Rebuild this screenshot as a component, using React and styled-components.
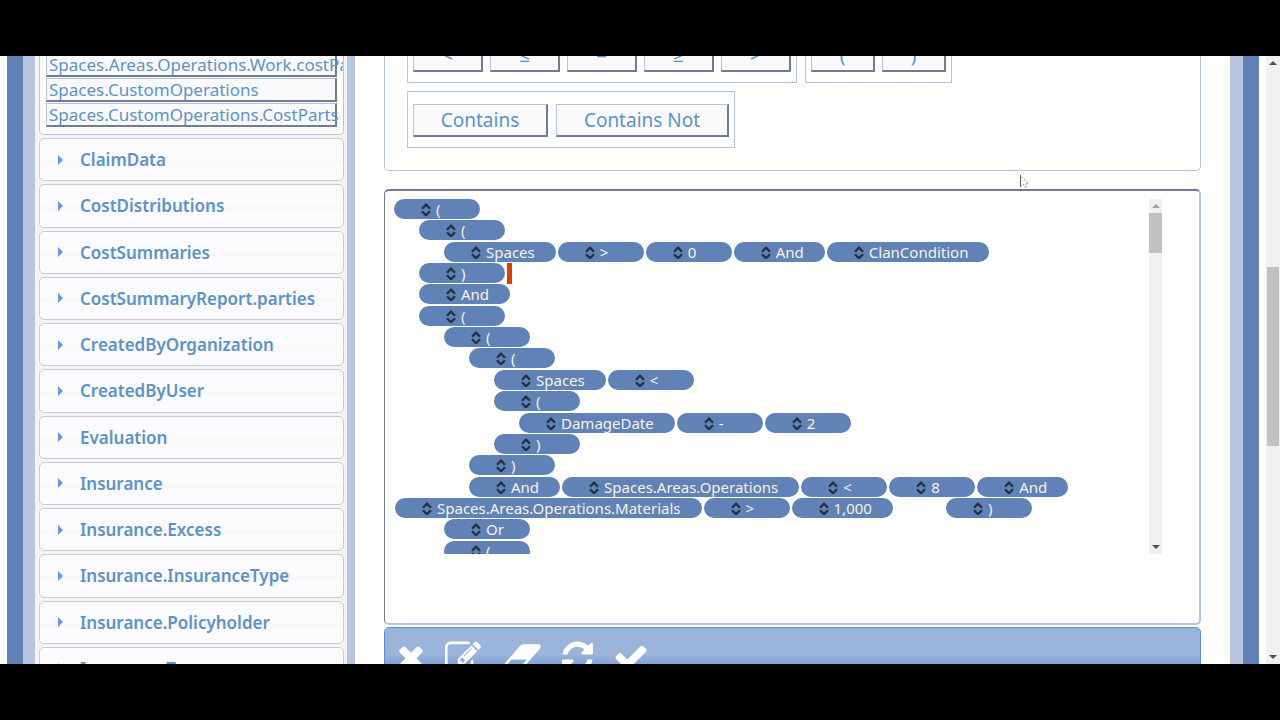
import React from "react";
import styled, { createGlobalStyle } from "styled-components";

const color = {
  steel: "#6082b6",
  light: "#b7c5e0",
  line: "#b4c4e0",
  dark: "#737b90",
  text: "#5b93c6",
  paper: "#fefefd",
};

const GlobalStyle = createGlobalStyle`
  * { box-sizing: border-box; }
  body { margin: 0; background: #000; font-family: "Noto Sans", "Open Sans", sans-serif; }
  button { font-family: inherit; margin: 0; cursor: pointer; }
`;

const Screen = styled.div`
  height: 100vh;
  padding: 56px 0;
  background: #000;
`;

const Page = styled.div`
  position: relative;
  display: flex;
  height: 100%;
  padding-left: 7px;
  overflow: hidden;
  background: ${color.paper};
`;

const Stripe = styled.div`
  flex: none;
  width: ${(p) => p.$width}px;
  background: ${(p) => p.$color};
`;

const Sidebar = styled.nav`
  flex: none;
  display: flex;
  flex-direction: column;
  width: 312px;
  padding: 0 3px 0 4px;
  background: #f3f4f5;
`;

const FieldList = styled.div`
  flex: none;
  display: flex;
  flex-direction: column;
  justify-content: flex-end;
  gap: 1px;
  height: 79px;
  padding: 0 6px 7px;
  overflow: hidden;
  border: 1px solid ${color.line};
  border-top: 0;
  border-radius: 0 0 5px 5px;
  background: ${color.paper};
`;

const Field = styled.button`
  flex: none;
  height: 24px;
  padding: 0 2px;
  border: solid;
  border-width: 1px 2px 2px 1px;
  border-color: ${color.line} ${color.dark} ${color.dark} ${color.line};
  background: #fafafc;
  color: ${color.text};
  font-size: 17px;
  line-height: 21px;
  text-align: left;
  white-space: nowrap;
`;

const Sections = styled.div`
  flex: 1;
  display: flex;
  flex-direction: column;
  gap: 3px;
  margin: 3px 0 -26px;
`;

const Section = styled.button`
  flex: 1;
  display: flex;
  align-items: center;
  gap: 16px;
  min-height: 42px;
  padding: 0 17px;
  border: 1px solid #cbccd2;
  border-radius: 5px;
  background: linear-gradient(#fbfbfd 50%, #f7f7f7 54%, #fbfbfd 62%);
  color: ${color.text};
  font-size: 17px;
  font-weight: 600;
  text-align: left;
`;

const Main = styled.main`
  flex: 1;
  display: flex;
  flex-direction: column;
  min-width: 0;
  padding: 0 29px;
`;

const Operators = styled.section`
  flex: none;
  display: flex;
  flex-direction: column;
  justify-content: flex-end;
  gap: 8px;
  height: 115px;
  padding: 0 22px 22px;
  overflow: hidden;
  border: 1px solid ${color.line};
  border-top: 0;
  border-radius: 0 0 5px 5px;
`;

const GroupRow = styled.div`
  display: flex;
  gap: 8px;
`;

const Group = styled.div`
  display: flex;
  gap: ${(p) => p.$gap}px;
  padding: 12px 5px 10px;
  border: 1px solid ${color.line};
`;

const Operator = styled.button`
  width: ${(p) => p.$width}px;
  height: 33px;
  padding: 0;
  border: solid;
  border-width: 1px 2px 2px 1px;
  border-color: ${color.line} ${color.dark} ${color.dark} ${color.line};
  background: #fafafc;
  color: ${color.text};
  font-size: 19px;
  line-height: 30px;
`;

const Editor = styled.section`
  flex: none;
  height: 436px;
  margin-top: 18px;
  padding: 8px 37px 0 9px;
  border: 1px solid ${color.dark};
  border-top-width: 2px;
  border-right: 2px solid ${color.line};
  border-bottom: 2px solid ${color.line};
  border-radius: 5px;
`;

const Scroller = styled.div`
  display: flex;
  height: 355px;
  overflow: hidden;
`;

const Tree = styled.div`
  flex: 1;
  display: grid;
  grid-auto-rows: 1fr;
  height: 363px;
`;

const TreeRow = styled.div`
  display: flex;
  align-items: flex-start;
  gap: 2px;
  padding-left: ${(p) => (p.$wrapped ? 1 : p.$depth * 25)}px;
`;

const Pill = styled.button`
  flex: none;
  display: flex;
  align-items: center;
  gap: 5px;
  min-width: 86px;
  height: 20px;
  padding: 0 21px 0 27px;
  border: 0;
  border-radius: 10px;
  background: ${color.steel};
  color: #f8f1e6;
  font-size: 15px;
  line-height: 20px;
  white-space: nowrap;
`;

const Space = styled.span`
  width: 49px;
`;

const Caret = styled.span`
  align-self: stretch;
  width: 5px;
  background: #dc3e04;
`;

const Track = styled.div`
  flex: none;
  display: flex;
  flex-direction: column;
  align-items: center;
  justify-content: space-between;
  width: ${(p) => p.$width}px;
  padding: 4px 0;
  background: #f0f0f3;
`;

const Thumb = styled.div`
  width: ${(p) => p.$width}px;
  height: ${(p) => p.$height}px;
  margin: ${(p) => p.$top}px 0 auto;
  background: #c1c1c2;
`;

const Toolbar = styled.div`
  flex: none;
  display: flex;
  align-items: flex-start;
  gap: 20px;
  height: 60px;
  margin-top: 2px;
  padding: 11px 12px;
  border: 1px solid #5f8fd4;
  border-radius: 5px;
  background: linear-gradient(#9ab4da 45%, #86a5d5 60%);
`;

const Tool = styled.button`
  display: flex;
  padding: 0;
  border: 0;
  background: none;
  color: #fff;
`;

const Gap = styled.div`
  flex: none;
  width: 7px;
`;

const Pointer = styled.svg`
  position: absolute;
  left: 1020px;
  top: 119px;
`;

const sections = [
  "ClaimData",
  "CostDistributions",
  "CostSummaries",
  "CostSummaryReport.parties",
  "CreatedByOrganization",
  "CreatedByUser",
  "Evaluation",
  "Insurance",
  "Insurance.Excess",
  "Insurance.InsuranceType",
  "Insurance.Policyholder",
  "Insurance.Type",
];

const fields = [
  "Spaces.Areas.Operations.Work.costParts",
  "Spaces.CustomOperations",
  "Spaces.CustomOperations.CostParts",
];

const rows = [
  { depth: 0, items: ["("] },
  { depth: 1, items: ["("] },
  { depth: 2, items: ["Spaces", ">", "0", "And", "ClanCondition"] },
  { depth: 1, items: [")"], caret: true },
  { depth: 1, items: ["And"] },
  { depth: 1, items: ["("] },
  { depth: 2, items: ["("] },
  { depth: 3, items: ["("] },
  { depth: 4, items: ["Spaces", "<"] },
  { depth: 4, items: ["("] },
  { depth: 5, items: ["DamageDate", "-", "2"] },
  { depth: 4, items: [")"] },
  { depth: 3, items: [")"] },
  { depth: 3, items: ["And", "Spaces.Areas.Operations", "<", "8", "And"] },
  { wrapped: true, items: ["Spaces.Areas.Operations.Materials", ">", "1,000", null, ")"] },
  { depth: 2, items: ["Or"] },
  { depth: 2, items: ["("] },
];

const tools = [
  {
    label: "Delete",
    x: 192,
    units: 1408,
    width: 28,
    d: "M1490 1322q0 40-28 68l-136 136q-28 28-68 28t-68-28l-294-294-294 294q-28 28-68 28t-68-28l-136-136q-28-28-28-68t28-68l294-294-294-294q-28-28-28-68t28-68l136-136q28-28 68-28t68 28l294 294 294-294q28-28 68-28t68 28l136 136q28 28 28 68t-28 68l-294 294 294 294q28 28 28 68z",
  },
  {
    label: "Edit",
    x: 0,
    units: 1792,
    width: 36,
    d: "M888 1184l116-116-152-152-116 116v56h96v96h56zm440-720q-16-16-33 1l-350 350q-17 17-1 33t33-1l350-350q17-17 1-33zm80 594v190q0 119-84.5 203.5t-203.5 84.5h-832q-119 0-203.5-84.5t-84.5-203.5v-832q0-119 84.5-203.5t203.5-84.5h832q63 0 117 25 15 7 18 23 3 17-9 29l-49 49q-14 14-32 8-23-6-45-6h-832q-66 0-113 47t-47 113v832q0 66 47 113t113 47h832q66 0 113-47t47-113v-126q0-13 9-22l64-64q15-15 35-7t20 29zm-96-738l288 288-672 672h-288v-288zm444 132l-92 92-288-288 92-92q28-28 68-28t68 28l152 152q28 28 28 68t-28 68z",
  },
  {
    label: "Clear",
    x: 0,
    units: 2048,
    width: 41,
    d: "M960 1408l336-384h-768l-336 384h768zm1013-1077q15 34 9.5 71.5t-30.5 65.5l-896 1024q-38 44-96 44h-768q-38 0-69.5-20.5t-47.5-54.5q-15-34-9.5-71.5t30.5-65.5l896-1024q38-44 96-44h768q38 0 69.5 20.5t47.5 54.5z",
  },
  {
    label: "Refresh",
    x: 128,
    units: 1536,
    width: 31,
    d: "M1639 1056q0 5-1 7-64 268-268 434.5t-478 166.5q-146 0-282.5-55t-243.5-157l-129 129q-19 19-45 19t-45-19-19-45v-448q0-26 19-45t45-19h448q26 0 45 19t19 45-19 45l-137 137q71 66 161 102t187 36q134 0 250-65t186-179q11-17 53-117 8-23 30-23h192q13 0 22.5 9.5t9.5 22.5zm25-800v448q0 26-19 45t-45 19h-448q-26 0-45-19t-19-45 19-45l138-138q-148-137-349-137-134 0-250 65t-186 179q-11 17-53 117-8 23-30 23h-199q-13 0-22.5-9.5t-9.5-22.5v-7q65-268 270-434.5t480-166.5q146 0 284 55.5t245 156.5l130-129q19-19 45-19t45 19 19 45z",
  },
  {
    label: "Apply",
    x: 0,
    units: 1792,
    width: 36,
    d: "M1671 566q0 40-28 68l-724 724-136 136q-28 28-68 28t-68-28l-136-136-362-362q-28-28-28-68t28-68l136-136q28-28 68-28t68 28l294 295 656-657q28-28 68-28t68 28l136 136q28 28 28 68z",
  },
];

const Triangle = () => (
  <svg width="7" height="10" viewBox="0 0 7 10" aria-hidden="true">
    <path d="M1 0l5 5-5 5z" fill="#6398e2" />
  </svg>
);

const SortIcon = () => (
  <svg width="10" height="14" viewBox="0 0 10 14" aria-hidden="true">
    <path
      d="M1 6.2L5 2.2l4 4M1 8.8l4 4 4-4"
      transform="translate(0 .5)"
      fill="none"
      stroke="#25303f"
      strokeWidth="2.3"
    />
  </svg>
);

const Arrow = ({ down, fill = "#4c4f58" }) => (
  <svg width="8" height="5" viewBox="0 0 8 5" aria-hidden="true">
    <path d={down ? "M0 0h8L4 4z" : "M0 5h8L4 1z"} fill={fill} />
  </svg>
);

function OperatorGroup({ items, width }) {
  return (
    <Group $gap={7}>
      {items.map((item) => (
        <Operator key={item} type="button" $width={width}>
          {item}
        </Operator>
      ))}
    </Group>
  );
}

export default function App() {
  return (
    <Screen>
      <GlobalStyle />
      <Page>
        <Stripe $width={16} $color={color.steel} />
        <Stripe $width={12} $color={color.light} />
        <Sidebar>
          <FieldList>
            {fields.map((f) => (
              <Field key={f} type="button">{f}</Field>
            ))}
          </FieldList>
          <Sections>
            {sections.map((s) => (
              <Section key={s} type="button">
                <Triangle />
                {s}
              </Section>
            ))}
          </Sections>
        </Sidebar>
        <Stripe $width={8} $color={color.light} />
        <Main>
          <Operators>
            <GroupRow>
              <OperatorGroup items={["<", "≤", "=", "≥", ">"]} width={70} />
              <OperatorGroup items={["(", ")"]} width={64} />
            </GroupRow>
            <GroupRow>
              <Group $gap={8}>
                <Operator type="button" $width={135}>Contains</Operator>
                <Operator type="button" $width={173}>Contains Not</Operator>
              </Group>
            </GroupRow>
          </Operators>
          <Editor>
            <Scroller>
              <Tree>
                {rows.map((row, i) => (
                  <TreeRow key={i} $depth={row.depth} $wrapped={row.wrapped}>
                    {row.items.map((item, j) =>
                      item === null ? (
                        <Space key={j} />
                      ) : (
                        <Pill key={j} type="button">
                          <SortIcon />
                          {item}
                        </Pill>
                      )
                    )}
                    {row.caret && <Caret />}
                  </TreeRow>
                ))}
              </Tree>
              <Track $width={13}>
                <Arrow fill="#a2a2a4" />
                <Thumb $width={13} $height={40} $top={5} />
                <Arrow down />
              </Track>
            </Scroller>
          </Editor>
          <Toolbar>
            {tools.map((t) => (
              <Tool key={t.label} type="button" aria-label={t.label}>
                <svg width={t.width} height="36" viewBox={`${t.x} 0 ${t.units} 1792`}>
                  <path d={t.d} fill="currentColor" />
                </svg>
              </Tool>
            ))}
          </Toolbar>
        </Main>
        <Stripe $width={13} $color={color.light} />
        <Stripe $width={16} $color={color.steel} />
        <Gap />
        <Track $width={14}>
          <Arrow />
          <Thumb $width={12} $height={179} $top={202} />
          <Arrow down />
        </Track>
        <Pointer width="10" height="14" viewBox="0 0 10 14" aria-hidden="true">
          <path d="M.5.5v11l2.500-2.500 2 3.500 1.500-1-1.500-3h3.500z" fill="#fff" />
          <path d="M.5 0v12" stroke="#5b5f6c" />
          <path d="M.5.5l8 8h-3l1.500 3-2 1-2-3.500-2.500 2.500" fill="none" stroke="#5b5f6c" strokeDasharray="1 1.500" />
        </Pointer>
      </Page>
    </Screen>
  );
}
